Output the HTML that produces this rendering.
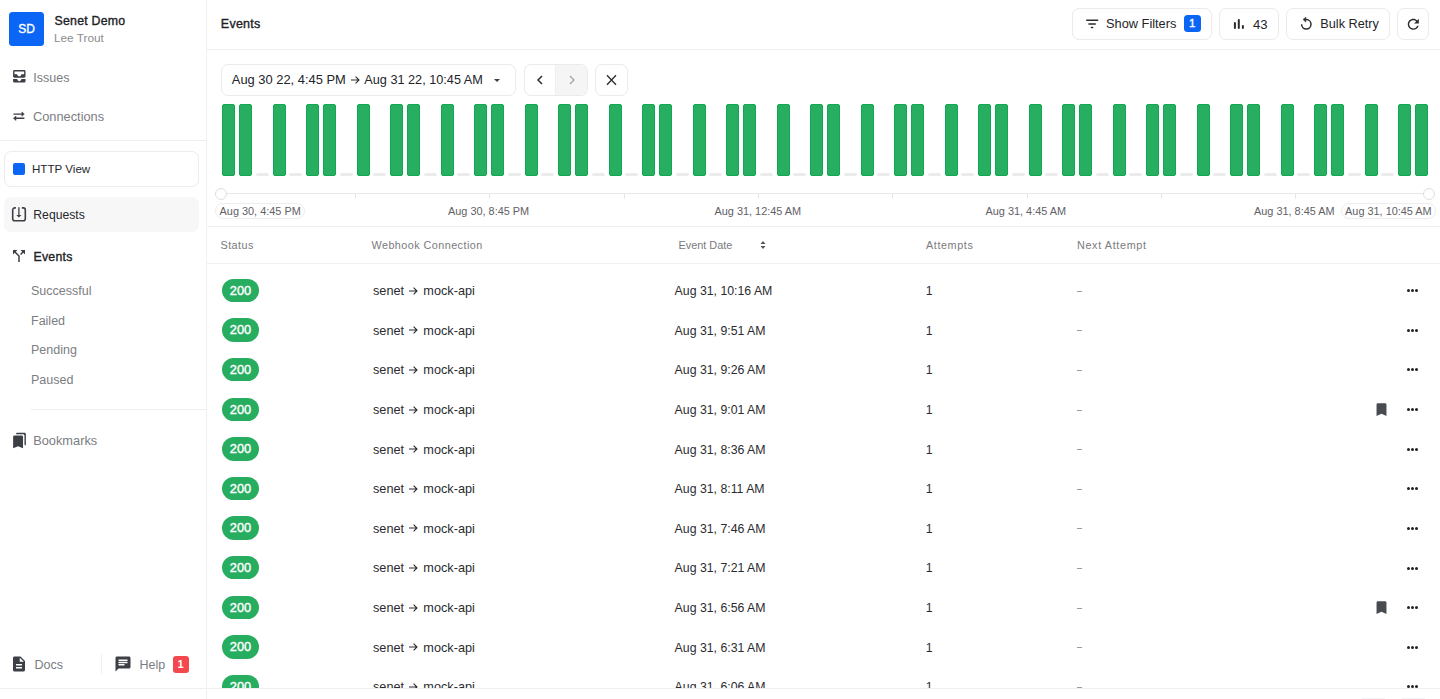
<!DOCTYPE html>
<html><head><meta charset="utf-8">
<style>
*{box-sizing:border-box;margin:0;padding:0}
html,body{width:1440px;height:699px;overflow:hidden;background:#fff}
body{position:relative;font-family:"Liberation Sans",sans-serif;color:#232428}
.a{position:absolute}
.t{position:absolute;white-space:nowrap;line-height:1}
svg{position:absolute;fill:#3c3f45}
.sb{-webkit-text-stroke:0.35px currentColor}
.bar{position:absolute;top:104px;width:13px;height:72px;background:#27ae61;border:1px solid #10a851;border-radius:2px}
.dash{position:absolute;top:173px;width:13px;height:3px;background:#ececef;border-radius:2px}
.tick{position:absolute;top:193px;width:1px;height:5.5px;background:#e6e6e8}
.btn{position:absolute;top:8px;height:32px;border:1px solid #ebebeb;border-radius:7px;background:#fff}
.badge{position:absolute;left:222px;width:37px;height:23.5px;border-radius:12px;background:#26ad5f;color:#fff;font-size:12.8px;-webkit-text-stroke:0.4px #fff;text-align:center;line-height:23.5px}
.rt{position:absolute;white-space:nowrap;line-height:20px;font-size:12.3px;color:#2a2b2f}
.rc{font-size:12.7px}
.arr{position:relative;display:inline-block;width:9px;height:8px;margin:0 5px 0 5.3px;vertical-align:0.5px;fill:none;stroke:#2a2b2f;stroke-width:1.1}
.ndash{position:absolute;width:5px;height:1px;background:#9a9a9a}
.bm{left:1372.75px;width:17px;height:17px;fill:#484b50}
.dots{position:absolute;left:1406.6px;width:13px;height:3px}
.dots i{position:absolute;top:0;width:3px;height:3px;border-radius:50%;background:#222}
.dots i:nth-child(1){left:0} .dots i:nth-child(2){left:4.3px} .dots i:nth-child(3){left:8.6px}
.th{position:absolute;top:239px;font-size:10.8px;letter-spacing:0.45px;color:#7a7a7e;line-height:12px;white-space:nowrap}
.nav{font-size:12.5px;color:#7b7d82}
.sub{font-size:12.5px;color:#7b7d82}
.lbl{position:absolute;top:203.2px;height:16.2px;border:1px solid #ededef;border-radius:8px;font-size:10.9px;color:#5f6166;line-height:14.2px;padding:0 3.6px;white-space:nowrap}
.plain{position:absolute;top:205px;font-size:10.9px;color:#5f6166;line-height:13.5px;white-space:nowrap}
</style></head><body>

<!-- sidebar -->
<div class="a" style="left:206px;top:0;width:1px;height:699px;background:#efeff1"></div>
<div class="a" style="left:0;top:688px;width:1440px;height:1px;background:#efeff1"></div>
<div class="a" style="left:9.3px;top:11.9px;width:34.6px;height:34px;border-radius:3.5px;background:#0b66f5;color:#fff;-webkit-text-stroke:0.35px #fff;font-size:12px;line-height:35px;text-align:center">SD</div>
<div class="t sb" style="left:54.5px;top:15.3px;font-size:12.3px;letter-spacing:0.25px;color:#202124">Senet Demo</div>
<div class="t" style="left:54px;top:32.5px;font-size:11.8px;color:#8b8c90">Lee Trout</div>

<svg style="left:10.6px;top:68px;width:16.6px;height:16.6px" viewBox="0 0 24 24"><path d="M19 3H5c-1.1 0-2 .9-2 2v7c0 1.1.9 2 2 2h14c1.1 0 2-.9 2-2V5c0-1.1-.9-2-2-2zm0 6h-4c0 1.62-1.38 3-3 3s-3-1.38-3-3H5V5h14v4zm-4 7h6v3c0 1.1-.9 2-2 2H5c-1.1 0-2-.9-2-2v-3h6c0 1.66 1.34 3 3 3s3-1.34 3-3z"/></svg>
<div class="t nav" style="left:33.3px;top:71.5px">Issues</div>
<svg style="left:11px;top:108px;width:16px;height:16px;fill:#3c3f45;stroke:#3c3f45" viewBox="0 0 16 16"><path d="M2.5 6.1H11.5M4.5 10.3H13.4" stroke-width="1.4" fill="none"/><path d="M10.9 3.9L13.3 6.1L10.9 8.3Z M5 8.1L2.4 10.3L5 12.5Z" stroke-width="0.5" stroke-linejoin="round"/></svg>
<div class="t nav" style="left:33px;top:110.5px;font-size:12.8px">Connections</div>
<div class="a" style="left:0;top:140px;width:206px;height:1px;background:#efeff1"></div>

<div class="a" style="left:4px;top:151px;width:195px;height:36px;border:1px solid #ececec;border-radius:7px"></div>
<div class="a" style="left:13px;top:163px;width:12px;height:12px;border-radius:2px;background:#0b66f5"></div>
<div class="t" style="left:32px;top:163.4px;font-size:11.6px;color:#26272b">HTTP View</div>

<div class="a" style="left:4px;top:197px;width:195px;height:35px;border-radius:7px;background:#f7f7f8"></div>
<svg style="left:11px;top:206px;width:16px;height:17px;fill:none;stroke:#3c3f45;stroke-width:1.6" viewBox="0 0 16 17"><path d="M4.9 1.9H3.7a2 2 0 0 0-2 2V12.8a2 2 0 0 0 2 2H12.3a2 2 0 0 0 2-2V3.9a2 2 0 0 0-2-2H10.85"/><path d="M7.9 1.3V9.8" stroke-width="1.3"/><path d="M5.3 9H10.5L7.9 11.6Z" fill="#3c3f45" stroke="none"/></svg>
<div class="t" style="left:33.3px;top:208.5px;font-size:12.2px;color:#26272b">Requests</div>

<svg style="left:10px;top:247px;width:18px;height:18px" viewBox="0 0 24 24"><path d="M14 4l2.29 2.29-2.88 2.88 1.42 1.42 2.88-2.88L20 10V4zm-4 0H4v6l2.29-2.29 4.71 4.7V20h2v-8.41l-5.29-5.3z"/></svg>
<div class="t sb" style="left:33.5px;top:250.5px;font-size:12.3px;letter-spacing:0.25px;color:#202124">Events</div>

<div class="t sub" style="left:31px;top:285px">Successful</div>
<div class="t sub" style="left:31px;top:314.5px">Failed</div>
<div class="t sub" style="left:31px;top:344px">Pending</div>
<div class="t sub" style="left:31px;top:373.5px">Paused</div>
<div class="a" style="left:31px;top:409px;width:175px;height:1px;background:#efeff1"></div>

<svg style="left:10.5px;top:431.5px;width:17px;height:17px" viewBox="0 0 24 24"><path d="M19 18l2 1V3c0-1.1-.9-2-2-2H8.99C7.89 1 7 1.9 7 3h10c1.1 0 2 .9 2 2v13zM15 5H5c-1.1 0-2 .9-2 2v16l7-3 7 3V7c0-1.1-.9-2-2-2z"/></svg>
<div class="t nav" style="left:33.2px;top:434.5px;font-size:12.8px">Bookmarks</div>

<svg style="left:10px;top:655px;width:18px;height:18px" viewBox="0 0 24 24"><path d="M14 2H6c-1.1 0-1.99.9-1.99 2L4 20c0 1.1.89 2 1.99 2H18c1.1 0 2-.9 2-2V8l-6-6zm2 16H8v-2h8v2zm0-4H8v-2h8v2zm-3-5V3.5L18.5 9H13z"/></svg>
<div class="t nav" style="left:34.5px;top:658.5px">Docs</div>
<div class="a" style="left:101px;top:654px;width:1px;height:20px;background:#efeff1"></div>
<svg style="left:114px;top:655px;width:18px;height:18px" viewBox="0 0 24 24"><path d="M20 2H4c-1.1 0-1.99.9-1.99 2L2 22l4-4h14c1.1 0 2-.9 2-2V4c0-1.1-.9-2-2-2zM6 9h12v2H6V9zm8 5H6v-2h8v2zm4-6H6V6h12v2z"/></svg>
<div class="t nav" style="left:139.5px;top:658.5px">Help</div>
<div class="a" style="left:172.5px;top:656px;width:16px;height:17px;border-radius:3px;background:#f4484e;color:#fff;font-size:11px;font-weight:bold;text-align:center;line-height:17px">1</div>

<!-- header -->
<div class="t sb" style="left:220.8px;top:17.8px;font-size:12.5px;letter-spacing:0.25px;color:#202124">Events</div>
<div class="a" style="left:207px;top:49px;width:1233px;height:1px;background:#efeff1"></div>

<div class="btn" style="left:1072px;width:140px"></div>
<svg style="left:1084px;top:16px;width:16px;height:16px;fill:none;stroke:#2b2d31;stroke-width:1.5;stroke-linecap:round" viewBox="0 0 16 16"><path d="M2.75 4.3H13.65M4.95 7.9H11.25M7.45 11.6H8.65"/></svg>
<div class="t" style="left:1106px;top:18.3px;font-size:12.8px;color:#232428">Show Filters</div>
<div class="a" style="left:1183.7px;top:15.1px;width:17px;height:17.4px;border-radius:3.5px;background:#0b66f5;color:#fff;font-size:11.5px;-webkit-text-stroke:0.35px #fff;text-align:center;line-height:17.4px">1</div>

<div class="btn" style="left:1219px;width:60px"></div>
<svg style="left:1232px;top:17px;width:13px;height:14px;fill:none;stroke:#2b2d31;stroke-width:2;stroke-linecap:round" viewBox="0 0 13 14"><path d="M2.9 5.9V10.9M6.8 3V10.9M10.9 8.9V10.9"/></svg>
<div class="t" style="left:1253px;top:18px;font-size:13.1px;color:#232428">43</div>

<div class="btn" style="left:1286px;width:104px"></div>
<svg style="left:1296px;top:13px;width:20px;height:20px;fill:#2b2d31;stroke:#2b2d31" viewBox="0 0 20 20"><path d="M5.6 11.3A4.7 4.7 0 1 0 10.3 6.6H9.5" fill="none" stroke-width="1.5"/><path d="M7.0 6.5L9.9 4.0V9.2Z" stroke-width="0.4" stroke-linejoin="round"/></svg>
<div class="t" style="left:1320.3px;top:18.3px;font-size:12.7px;color:#232428">Bulk Retry</div>

<div class="btn" style="left:1397px;width:32px"></div>
<svg style="left:1404.8px;top:16.2px;width:16.6px;height:16.6px;fill:#2b2d31" viewBox="0 0 24 24"><path d="M17.65 6.35C16.2 4.9 14.21 4 12 4c-4.42 0-7.99 3.58-7.99 8s3.57 8 7.99 8c3.73 0 6.84-2.55 7.730-6h-2.08c-.82 2.33-3.04 4-5.65 4-3.31 0-6-2.69-6-6s2.69-6 6-6c1.66 0 3.14.69 4.22 1.78L13 11h7V4l-2.35 2.35z"/></svg>

<!-- date controls -->
<div class="a" style="left:221px;top:64px;width:295px;height:32px;border:1px solid #ebebeb;border-radius:7px"></div>
<div class="t" style="left:231.8px;top:74px;font-size:12.9px;color:#232428">Aug 30 22, 4:45 PM</div>
<svg class="arr2" style="left:351px;top:76px;width:9px;height:8px;fill:none;stroke:#2a2b2f;stroke-width:1.1" viewBox="0 0 9 8"><path d="M0 4H8M4.6 0.6L8 4L4.6 7.4"/></svg>
<div class="t" style="left:364.3px;top:74px;font-size:12.7px;color:#232428">Aug 31 22, 10:45 AM</div>
<svg style="left:490px;top:74px;width:14px;height:12px" viewBox="0 0 14 12"><path d="M4 5h6l-3 3z"/></svg>

<div class="a" style="left:524px;top:64px;width:64px;height:32px;border:1px solid #ebebeb;border-radius:7px;overflow:hidden"><div class="a" style="left:30px;top:0;width:33px;height:30px;background:#f5f5f6;border-left:1px solid #efefef"></div></div>
<svg style="left:534px;top:74px;width:12px;height:12px;fill:none;stroke:#2b2d31;stroke-width:1.5" viewBox="0 0 12 12"><path d="M8 2L4 6l4 4"/></svg>
<svg style="left:566px;top:74px;width:12px;height:12px;fill:none;stroke:#a0a2a6;stroke-width:1.3" viewBox="0 0 12 12"><path d="M4 2l4 4-4 4"/></svg>

<div class="a" style="left:595px;top:64px;width:33px;height:32px;border:1px solid #ebebeb;border-radius:7px"></div>
<svg style="left:605px;top:74px;width:13px;height:12px;fill:none;stroke:#2b2d31;stroke-width:1.3" viewBox="0 0 13 12"><path d="M2 1.2l9 9.6M11 1.2L2 10.8"/></svg>

<!-- chart -->
<div class="bar" style="left:222.1px"></div>
<div class="bar" style="left:238.9px"></div>
<div class="dash" style="left:255.7px"></div>
<div class="bar" style="left:272.5px"></div>
<div class="dash" style="left:289.3px"></div>
<div class="bar" style="left:306.1px"></div>
<div class="bar" style="left:322.9px"></div>
<div class="dash" style="left:339.7px"></div>
<div class="bar" style="left:356.5px"></div>
<div class="dash" style="left:373.3px"></div>
<div class="bar" style="left:390.1px"></div>
<div class="bar" style="left:406.9px"></div>
<div class="dash" style="left:423.7px"></div>
<div class="bar" style="left:440.5px"></div>
<div class="dash" style="left:457.3px"></div>
<div class="bar" style="left:474.1px"></div>
<div class="bar" style="left:490.9px"></div>
<div class="dash" style="left:507.7px"></div>
<div class="bar" style="left:524.5px"></div>
<div class="dash" style="left:541.3px"></div>
<div class="bar" style="left:558.1px"></div>
<div class="bar" style="left:574.9px"></div>
<div class="dash" style="left:591.7px"></div>
<div class="bar" style="left:608.5px"></div>
<div class="dash" style="left:625.3px"></div>
<div class="bar" style="left:642.1px"></div>
<div class="bar" style="left:658.9px"></div>
<div class="dash" style="left:675.7px"></div>
<div class="bar" style="left:692.5px"></div>
<div class="dash" style="left:709.3px"></div>
<div class="bar" style="left:726.1px"></div>
<div class="bar" style="left:742.9px"></div>
<div class="dash" style="left:759.7px"></div>
<div class="bar" style="left:776.5px"></div>
<div class="dash" style="left:793.3px"></div>
<div class="bar" style="left:810.1px"></div>
<div class="bar" style="left:826.9px"></div>
<div class="dash" style="left:843.7px"></div>
<div class="bar" style="left:860.5px"></div>
<div class="dash" style="left:877.3px"></div>
<div class="bar" style="left:894.1px"></div>
<div class="bar" style="left:910.9px"></div>
<div class="dash" style="left:927.7px"></div>
<div class="bar" style="left:944.5px"></div>
<div class="dash" style="left:961.3px"></div>
<div class="bar" style="left:978.1px"></div>
<div class="bar" style="left:994.9px"></div>
<div class="dash" style="left:1011.7px"></div>
<div class="bar" style="left:1028.5px"></div>
<div class="dash" style="left:1045.3px"></div>
<div class="bar" style="left:1062.1px"></div>
<div class="bar" style="left:1078.9px"></div>
<div class="dash" style="left:1095.7px"></div>
<div class="bar" style="left:1112.5px"></div>
<div class="dash" style="left:1129.3px"></div>
<div class="bar" style="left:1146.1px"></div>
<div class="bar" style="left:1162.9px"></div>
<div class="dash" style="left:1179.7px"></div>
<div class="bar" style="left:1196.5px"></div>
<div class="dash" style="left:1213.3px"></div>
<div class="bar" style="left:1230.1px"></div>
<div class="bar" style="left:1246.9px"></div>
<div class="dash" style="left:1263.7px"></div>
<div class="bar" style="left:1280.5px"></div>
<div class="dash" style="left:1297.3px"></div>
<div class="bar" style="left:1314.1px"></div>
<div class="bar" style="left:1330.9px"></div>
<div class="dash" style="left:1347.7px"></div>
<div class="bar" style="left:1364.5px"></div>
<div class="dash" style="left:1381.3px"></div>
<div class="bar" style="left:1398.1px"></div>
<div class="bar" style="left:1414.9px"></div>
<div class="a" style="left:221px;top:192.6px;width:1207px;height:1.2px;background:#e8e8ea"></div>
<div class="tick" style="left:354.9px"></div>
<div class="tick" style="left:489.2px"></div>
<div class="tick" style="left:623.5px"></div>
<div class="tick" style="left:757.9px"></div>
<div class="tick" style="left:892.2px"></div>
<div class="tick" style="left:1026.6px"></div>
<div class="tick" style="left:1160.9px"></div>
<div class="tick" style="left:1295.3px"></div>
<div class="a" style="left:215.2px;top:188px;width:12px;height:12px;border-radius:50%;border:1px solid #dedee0;background:#fff"></div>
<div class="a" style="left:1422.5px;top:188px;width:12px;height:12px;border-radius:50%;border:1px solid #dedee0;background:#fff"></div>
<div class="lbl" style="left:215px">Aug 30, 4:45 PM</div>
<div class="plain" style="left:448px">Aug 30, 8:45 PM</div>
<div class="plain" style="left:714.5px">Aug 31, 12:45 AM</div>
<div class="plain" style="left:985.5px">Aug 31, 4:45 AM</div>
<div class="plain" style="left:1254px">Aug 31, 8:45 AM</div>
<div class="lbl" style="left:1340.5px">Aug 31, 10:45 AM</div>
<div class="a" style="left:207px;top:226px;width:1233px;height:1px;background:#efeff1"></div>

<!-- table -->
<div class="th" style="left:220.5px">Status</div>
<div class="th" style="left:371.5px">Webhook Connection</div>
<div class="th" style="left:678.5px;letter-spacing:0;font-size:10.9px">Event Date</div>
<svg style="left:759px;top:240px;width:8px;height:10px" viewBox="0 0 8 10"><path d="M4 1l2.5 3h-5zM4 9l2.5-3h-5z" fill="#55575b"/></svg>
<div class="th" style="left:926px;letter-spacing:0.6px">Attempts</div>
<div class="th" style="left:1077px;letter-spacing:0.65px">Next Attempt</div>
<div class="a" style="left:207px;top:263px;width:1233px;height:1px;background:#f0f0f0"></div>

<div class="a" style="left:207px;top:264px;width:1233px;height:424px;overflow:hidden">
<div class="a" style="left:-207px;top:-264px;width:1440px;height:699px">
<div class="badge" style="top:278.65px">200</div>
<div class="rt rc" style="left:373px;top:281.15px">senet<svg class="arr" viewBox="0 0 9 8"><path d="M0 4H8M4.6 0.6L8 4L4.6 7.4"/></svg>mock-api</div>
<div class="rt" style="left:674.6px;top:281.15px">Aug 31, 10:16 AM</div>
<div class="rt" style="left:925.8px;top:281.15px">1</div>
<div class="ndash" style="left:1076.5px;top:290.75px"></div>

<div class="dots" style="top:289.25px"><i></i><i></i><i></i></div>
<div class="badge" style="top:318.27px">200</div>
<div class="rt rc" style="left:373px;top:320.77px">senet<svg class="arr" viewBox="0 0 9 8"><path d="M0 4H8M4.6 0.6L8 4L4.6 7.4"/></svg>mock-api</div>
<div class="rt" style="left:674.6px;top:320.77px">Aug 31, 9:51 AM</div>
<div class="rt" style="left:925.8px;top:320.77px">1</div>
<div class="ndash" style="left:1076.5px;top:330.37px"></div>

<div class="dots" style="top:328.87px"><i></i><i></i><i></i></div>
<div class="badge" style="top:357.89px">200</div>
<div class="rt rc" style="left:373px;top:360.39px">senet<svg class="arr" viewBox="0 0 9 8"><path d="M0 4H8M4.6 0.6L8 4L4.6 7.4"/></svg>mock-api</div>
<div class="rt" style="left:674.6px;top:360.39px">Aug 31, 9:26 AM</div>
<div class="rt" style="left:925.8px;top:360.39px">1</div>
<div class="ndash" style="left:1076.5px;top:369.99px"></div>

<div class="dots" style="top:368.49px"><i></i><i></i><i></i></div>
<div class="badge" style="top:397.51px">200</div>
<div class="rt rc" style="left:373px;top:400.01px">senet<svg class="arr" viewBox="0 0 9 8"><path d="M0 4H8M4.6 0.6L8 4L4.6 7.4"/></svg>mock-api</div>
<div class="rt" style="left:674.6px;top:400.01px">Aug 31, 9:01 AM</div>
<div class="rt" style="left:925.8px;top:400.01px">1</div>
<div class="ndash" style="left:1076.5px;top:409.61px"></div>
<svg class="bm" style="top:401.3px" viewBox="0 0 24 24"><path d="M17 3H7c-1.1 0-1.99.9-1.99 2L5 21l7-3 7 3V5c0-1.1-.9-2-2-2z"/></svg>
<div class="dots" style="top:408.11px"><i></i><i></i><i></i></div>
<div class="badge" style="top:437.13px">200</div>
<div class="rt rc" style="left:373px;top:439.63px">senet<svg class="arr" viewBox="0 0 9 8"><path d="M0 4H8M4.6 0.6L8 4L4.6 7.4"/></svg>mock-api</div>
<div class="rt" style="left:674.6px;top:439.63px">Aug 31, 8:36 AM</div>
<div class="rt" style="left:925.8px;top:439.63px">1</div>
<div class="ndash" style="left:1076.5px;top:449.23px"></div>

<div class="dots" style="top:447.73px"><i></i><i></i><i></i></div>
<div class="badge" style="top:476.75px">200</div>
<div class="rt rc" style="left:373px;top:479.25px">senet<svg class="arr" viewBox="0 0 9 8"><path d="M0 4H8M4.6 0.6L8 4L4.6 7.4"/></svg>mock-api</div>
<div class="rt" style="left:674.6px;top:479.25px">Aug 31, 8:11 AM</div>
<div class="rt" style="left:925.8px;top:479.25px">1</div>
<div class="ndash" style="left:1076.5px;top:488.85px"></div>

<div class="dots" style="top:487.35px"><i></i><i></i><i></i></div>
<div class="badge" style="top:516.37px">200</div>
<div class="rt rc" style="left:373px;top:518.87px">senet<svg class="arr" viewBox="0 0 9 8"><path d="M0 4H8M4.6 0.6L8 4L4.6 7.4"/></svg>mock-api</div>
<div class="rt" style="left:674.6px;top:518.87px">Aug 31, 7:46 AM</div>
<div class="rt" style="left:925.8px;top:518.87px">1</div>
<div class="ndash" style="left:1076.5px;top:528.47px"></div>

<div class="dots" style="top:526.97px"><i></i><i></i><i></i></div>
<div class="badge" style="top:555.99px">200</div>
<div class="rt rc" style="left:373px;top:558.49px">senet<svg class="arr" viewBox="0 0 9 8"><path d="M0 4H8M4.6 0.6L8 4L4.6 7.4"/></svg>mock-api</div>
<div class="rt" style="left:674.6px;top:558.49px">Aug 31, 7:21 AM</div>
<div class="rt" style="left:925.8px;top:558.49px">1</div>
<div class="ndash" style="left:1076.5px;top:568.09px"></div>

<div class="dots" style="top:566.59px"><i></i><i></i><i></i></div>
<div class="badge" style="top:595.61px">200</div>
<div class="rt rc" style="left:373px;top:598.11px">senet<svg class="arr" viewBox="0 0 9 8"><path d="M0 4H8M4.6 0.6L8 4L4.6 7.4"/></svg>mock-api</div>
<div class="rt" style="left:674.6px;top:598.11px">Aug 31, 6:56 AM</div>
<div class="rt" style="left:925.8px;top:598.11px">1</div>
<div class="ndash" style="left:1076.5px;top:607.71px"></div>
<svg class="bm" style="top:599.4px" viewBox="0 0 24 24"><path d="M17 3H7c-1.1 0-1.99.9-1.99 2L5 21l7-3 7 3V5c0-1.1-.9-2-2-2z"/></svg>
<div class="dots" style="top:606.21px"><i></i><i></i><i></i></div>
<div class="badge" style="top:635.23px">200</div>
<div class="rt rc" style="left:373px;top:637.73px">senet<svg class="arr" viewBox="0 0 9 8"><path d="M0 4H8M4.6 0.6L8 4L4.6 7.4"/></svg>mock-api</div>
<div class="rt" style="left:674.6px;top:637.73px">Aug 31, 6:31 AM</div>
<div class="rt" style="left:925.8px;top:637.73px">1</div>
<div class="ndash" style="left:1076.5px;top:647.33px"></div>

<div class="dots" style="top:645.83px"><i></i><i></i><i></i></div>
<div class="badge" style="top:674.85px">200</div>
<div class="rt rc" style="left:373px;top:677.35px">senet<svg class="arr" viewBox="0 0 9 8"><path d="M0 4H8M4.6 0.6L8 4L4.6 7.4"/></svg>mock-api</div>
<div class="rt" style="left:674.6px;top:677.35px">Aug 31, 6:06 AM</div>
<div class="rt" style="left:925.8px;top:677.35px">1</div>
<div class="ndash" style="left:1076.5px;top:686.95px"></div>

<div class="dots" style="top:685.45px"><i></i><i></i><i></i></div>
</div></div>
<div class="a" style="left:1362px;top:698px;width:23px;height:1px;background:#f3f4f6"></div>
<div class="a" style="left:1401.5px;top:698px;width:23px;height:1px;background:#f3f4f6"></div>
</body></html>
